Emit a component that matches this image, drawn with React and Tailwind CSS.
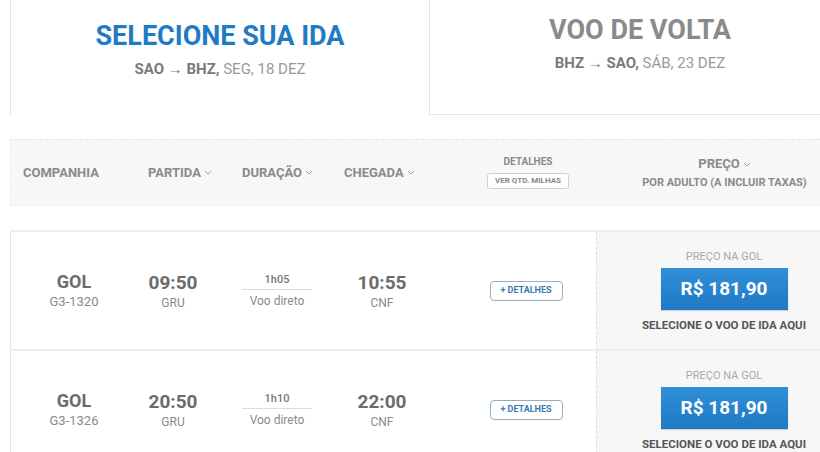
import React from "react"

const Chev = () => (
  <svg width="8" height="5" viewBox="0 0 8 5" className="ml-[3px] inline-block">
    <path d="M1 1l3 3 3-3" fill="none" stroke="#a0a0a0" strokeWidth="1" />
  </svg>
)

const flights = [
  { code: "G3-1320", dep: "09:50", dur: "1h05", arr: "10:55" },
  { code: "G3-1326", dep: "20:50", dur: "1h10", arr: "22:00" },
]

function FlightRow({ f }) {
  return (
    <div className="flex h-[119px] border-t-2 border-[#eeeeee] border-l border-l-[#e6e6e6] text-[#6b6b6b]">
      <div className="w-[126px] shrink-0 flex flex-col items-center justify-center">
        <div className="text-[18px] font-bold leading-[22px]">GOL</div>
        <div className="text-[13px] text-[#8a8a8a] leading-[18px]">{f.code}</div>
      </div>
      <div className="w-[72px] shrink-0 flex flex-col items-center justify-center">
        <div className="text-[19px] font-bold leading-[24px]">{f.dep}</div>
        <div className="text-[12px] text-[#8a8a8a] leading-[16px]">GRU</div>
      </div>
      <div className="w-[136px] shrink-0 flex flex-col items-center justify-center">
        <div className="w-[70px] text-center text-[11px] font-medium text-[#777] leading-[14px] pb-[2px] border-b border-[#dcdcdc]">{f.dur}</div>
        <div className="text-[12px] text-[#8a8a8a] leading-[16px] mt-[3px]">Voo direto</div>
      </div>
      <div className="w-[74px] shrink-0 flex flex-col items-center justify-center">
        <div className="text-[19px] font-bold leading-[24px]">{f.arr}</div>
        <div className="text-[12px] text-[#8a8a8a] leading-[16px]">CNF</div>
      </div>
      <div className="w-[177px] shrink-0 flex items-center justify-center pl-[37px]">
        <div className="w-[73px] h-[20px] flex items-center justify-center rounded-[4px] border border-[#8fb0c8] text-[9px] font-bold text-[#3a7bb0]">
          + DETALHES
        </div>
      </div>
      <div className="w-[255px] shrink-0 bg-[#f7f7f7] border-l border-dashed border-[#dddddd] flex flex-col items-center pt-[18px]">
        <div className="text-[11px] text-[#a8a8a8] leading-[14px]">PREÇO NA GOL</div>
        <div className="mt-[4px] w-[127px] h-[42px] flex items-center justify-center bg-gradient-to-b from-[#2f8fd9] to-[#2079c4] text-white text-[19px] font-bold shadow-[0_1px_1px_rgba(0,0,0,0.15)]">
          R$ 181,90
        </div>
        <div className="mt-[8px] text-[11.5px] font-bold text-[#555] leading-[14px]">SELECIONE O VOO DE IDA AQUI</div>
      </div>
    </div>
  )
}

export default function App() {
  return (
    <div className="w-[820px] h-[452px] overflow-hidden bg-white" style={{ fontFamily: "Roboto, 'Liberation Sans', sans-serif" }}>
      <div className="w-[840px] ml-[10px]">
        <div className="flex h-[115px]">
          <div className="w-[420px] shrink-0 border-l border-r border-[#e6e6e6] flex flex-col items-center pt-[19px]">
            <div className="text-[27px] font-bold text-[#1f7bc4] leading-[34px]">SELECIONE SUA IDA</div>
            <div className="mt-[6px] text-[15px] text-[#9a9a9a] leading-[20px]">
              <span className="font-bold text-[#7a7a7a]">SAO → BHZ,</span> SEG, 18 DEZ
            </div>
          </div>
          <div className="w-[420px] shrink-0 border-b border-[#e6e6e6] flex flex-col items-center pt-[13px]">
            <div className="text-[27px] font-bold text-[#8a8a8a] leading-[34px]">VOO DE VOLTA</div>
            <div className="mt-[6px] text-[15px] text-[#9a9a9a] leading-[20px]">
              <span className="font-bold text-[#7a7a7a]">BHZ → SAO,</span> SÁB, 23 DEZ
            </div>
          </div>
        </div>

        <div className="mt-[24px] h-[67px] flex items-center bg-[#f7f7f7] border-t border-dashed border-[#e2e2e2] border-b border-b-[#eeeeee] border-l border-l-[#eeeeee] text-[13px] font-bold text-[#8a8a8a]">
          <div className="w-[137px] shrink-0 pl-[12px]">COMPANHIA</div>
          <div className="w-[94px] shrink-0 flex items-center">PARTIDA<Chev /></div>
          <div className="w-[102px] shrink-0 flex items-center">DURAÇÃO<Chev /></div>
          <div className="w-[126px] shrink-0 flex items-center">CHEGADA<Chev /></div>
          <div className="w-[116px] shrink-0 flex flex-col items-center">
            <div className="text-[10px] leading-[12px]">DETALHES</div>
            <div className="mt-[5px] px-[7px] h-[16px] flex items-center rounded-[3px] border border-[#d0d0d0] bg-white text-[8px] font-bold text-[#888]">VER QTD. MILHAS</div>
          </div>
          <div className="w-[277px] shrink-0 flex flex-col items-center">
            <div className="text-[13px] leading-[16px] flex items-center">PREÇO<Chev /></div>
            <div className="mt-[4px] text-[11px] leading-[13px]">POR ADULTO (A INCLUIR TAXAS)</div>
          </div>
        </div>

        <div className="mt-[24px]">
          {flights.map((f) => (
            <FlightRow key={f.code} f={f} />
          ))}
        </div>
      </div>
    </div>
  )
}
